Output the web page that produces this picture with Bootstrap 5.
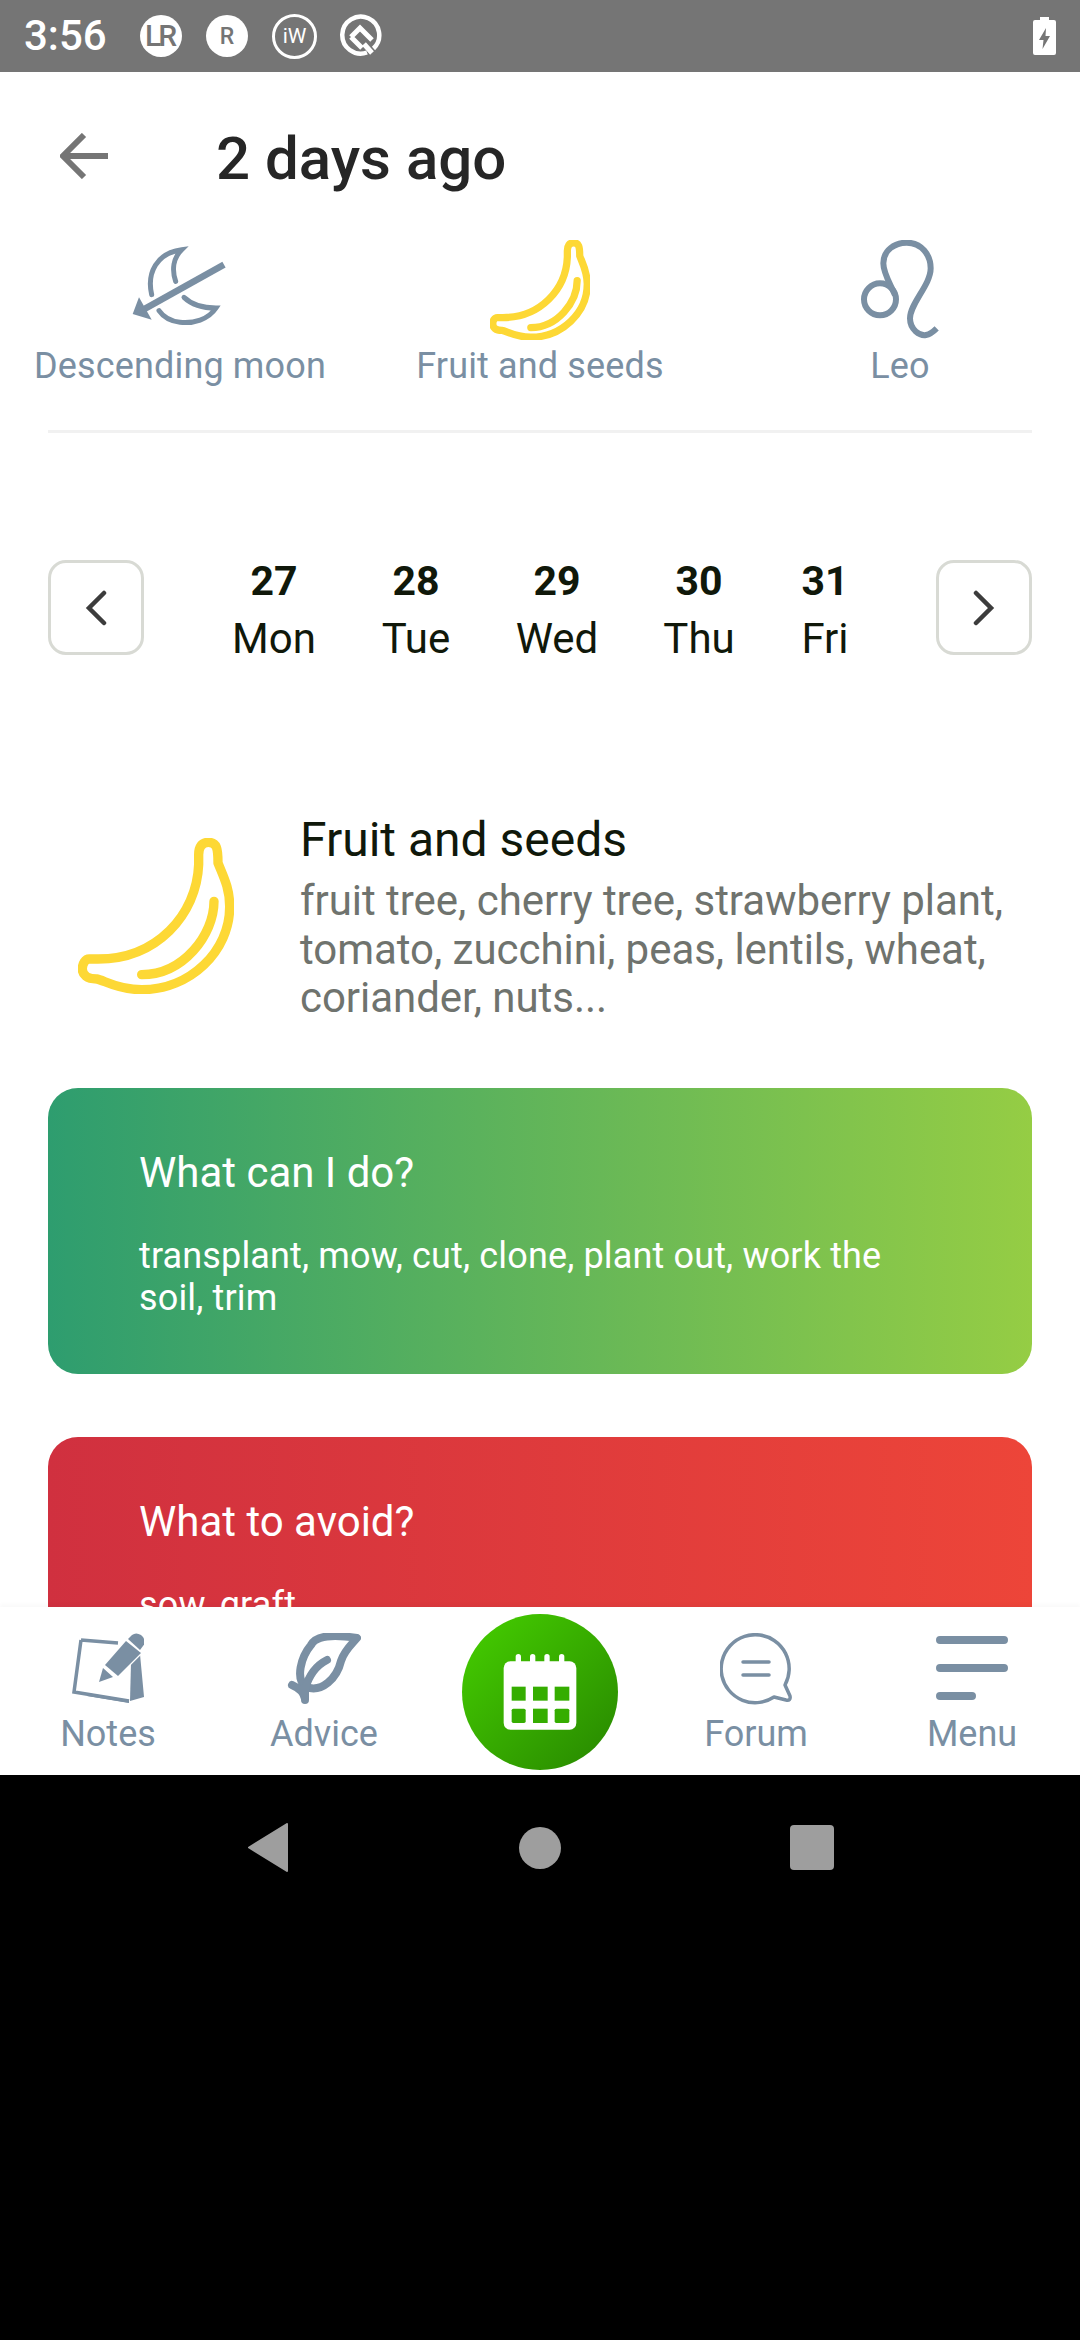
<!DOCTYPE html>
<html lang="en">
<head>
    <meta charset="UTF-8">
    <meta name="viewport" content="width=device-width, initial-scale=1.0">
    <title>2 days ago</title>
    <link href="https://cdn.jsdelivr.net/npm/bootstrap@5.3.0/dist/css/bootstrap.min.css" rel="stylesheet">
    <style>
        html, body { background: #000; overflow: hidden; height: 2340px; }
        body { font-family: Roboto, "Liberation Sans", sans-serif; }
        .phone-shell { width: 1080px; height: 2340px; overflow: hidden; }

        /* status bar */
        .status-strip { height: 72px; background: #757575; color: #fff; padding: 0 24px; }
        .status-time { font-size: 42px; font-weight: 500; line-height: 72px; width: 116px; }
        .status-dot { width: 42px; height: 42px; border-radius: 50%; background: #fff; color: #757575; font-weight: 500; margin-right: 24px; line-height: 1; }
        .dot-lr { font-size: 30px; letter-spacing: -3px; padding-right: 3px; }
        .dot-r { font-size: 23px; }
        .dot-iw { background: transparent; color: #fff; border: 3px solid #fff; font-size: 21px; font-weight: 400; width: 45px; height: 45px; margin-right: 22px; }

        /* scrolling area */
        .screen-body { height: 1535px; background: #fff; overflow: hidden; }
        .page-head { height: 168px; padding-left: 60px; }
        .page-title { font-size: 60px; font-weight: 500; color: #262626; margin: 6px 0 0 108px; line-height: 70px; }
        .moon-col svg { display: block; margin: 0 auto; }
        .moon-label { font-size: 36px; letter-spacing: .15px; line-height: 42px; color: #7a8fa3; margin-top: 5px; }
        .thin-rule { height: 3px; background: #f1f1f1; margin: 43px 48px 0; }

        .date-strip { margin: 127px 48px 0; height: 95px; }
        .arrow-box { width: 96px; height: 95px; border: 3px solid #d8dad4; border-radius: 18px; background: #fff; padding: 0; }
        .date-cell { position: absolute; top: -8px; transform: translateX(-50%); text-align: center; color: #10180a; font-size: 42px; line-height: 58px; white-space: nowrap; }
        .date-cell b { display: block; font-size: 41px; font-weight: 700; }
        .date-list { position: relative; flex: 1 1 auto; height: 95px; }

        .fruit-block { margin: 183px 48px 0 78px; }
        .fruit-pic { width: 156px; height: 156px; margin-right: 66px; flex: none; }
        .fruit-text { margin-top: -26px; }
        .fruit-name { font-size: 48px; line-height: 56px; color: #10180a; font-weight: 400; margin: 0 0 9px; }
        .fruit-desc { font-size: 42px; letter-spacing: -.04px; line-height: 48.5px; color: #6f736e; margin: 0; }

        .tip-panel { margin: 0 48px; border: 0; border-radius: 30px; color: #fff; padding: 60px 91px 55px; }
        .tip-green { margin-top: 65px; background: linear-gradient(90deg, #2e9d6f, #95cd44); }
        .tip-red { margin-top: 63px; background: linear-gradient(90deg, #d0303f, #ed4539); }
        .tip-head { font-size: 42px; line-height: 50px; font-weight: 400; margin: 0 0 37px; }
        .tip-body { font-size: 36px; letter-spacing: .15px; line-height: 42px; margin: 0; }

        /* bottom tabs */
        .tab-strip { height: 168px; background: #fff; position: relative; box-shadow: 0 -3px 4px rgba(0, 0, 0, .025); }
        .tab-slot { width: 216px; color: #7a8fa3; font-size: 36px; line-height: 42px; padding-top: 26px; text-align: center; }
        .tab-slot svg { display: block; margin: 0 auto 8px; }
        .fab-slot { width: 216px; padding-top: 7px; }
        .fab-round { width: 156px; height: 156px; border-radius: 50%; margin: 0 auto; background: linear-gradient(135deg, #46d000, #278600); }

        /* android buttons */
        .sys-strip { height: 565px; background: #000; padding-top: 48px; gap: 229px; }
    </style>
</head>
<body>
    <svg width="0" height="0" class="d-block position-absolute">
        <symbol id="banana" viewBox="234 110 468 468">
            <path fill="none" stroke="#fdd835" stroke-linecap="round" stroke-linejoin="round" d="M654 185C654 140 650 123 625 123C605 123 596 137 596 160V190C590 340 470 475 290 473H268C255 473 247 488 247 503C247 520 260 533 290 533C310 535 350 565 425 565C570 565 690 450 689 315C689 260 670 225 654 185Z"/>
            <path fill="none" stroke="#fdd835" stroke-linecap="round" d="M642 300C642 400 550 520 425 520"/>
        </symbol>
    </svg>

    <div class="phone-shell d-flex flex-column">
        <div class="status-strip d-flex align-items-center flex-none">
            <span class="status-time">3:56</span>
            <span class="status-dot dot-lr d-flex align-items-center justify-content-center">LR</span>
            <span class="status-dot dot-r d-flex align-items-center justify-content-center">R</span>
            <span class="status-dot dot-iw d-flex align-items-center justify-content-center">iW</span>
            <svg width="44" height="44" viewBox="0 0 44 44">
                <path d="M28 38.5A18.5 18.5 0 1 1 34.5 34.5" fill="none" stroke="#fff" stroke-width="4.5"/>
                <path d="M12 23L21 14L33 26M12 23L23 34M25 30L33 39" fill="none" stroke="#fff" stroke-width="5"/>
            </svg>
            <svg class="ms-auto" width="23" height="38" viewBox="0 0 23 38">
                <path d="M7 0H16V3H21Q23 3 23 5V36Q23 38 21 38H2Q0 38 0 36V5Q0 3 2 3H7Z" fill="#fff"/>
                <path d="M13 11L6 23H10.5L9.5 32L17 19H12.5Z" fill="#757575"/>
            </svg>
        </div>

        <div class="screen-body">
            <div class="page-head d-flex align-items-center">
                <svg width="48" height="46" viewBox="0 0 48 46"><path d="M48 23H4M24 2L3 23L24 44" fill="none" stroke="#757575" stroke-width="6"/></svg>
                <h1 class="page-title">2 days ago</h1>
            </div>

            <div class="row g-0 text-center">
                <div class="col-4 moon-col">
                    <svg width="140" height="100" viewBox="0 31 420 300">
                        <g fill="none" stroke="#7a8fa3" stroke-width="15" stroke-linecap="round">
                            <path d="M125 195C110 130 140 70 215 60C190 85 185 120 197 155"/>
                            <path d="M222 203C245 225 275 235 318 235C295 270 250 282 210 278C185 275 160 262 147 243"/>
                        </g>
                        <path d="M342 105L100 240" stroke="#7a8fa3" stroke-width="20" fill="none"/>
                        <path d="M68 253L87 203L125 270Z" fill="#7a8fa3"/>
                    </svg>
                    <div class="moon-label">Descending moon</div>
                </div>
                <div class="col-4 moon-col">
                    <svg width="100" height="100" stroke-width="34"><use href="#banana"/></svg>
                    <div class="moon-label">Fruit and seeds</div>
                </div>
                <div class="col-4 moon-col">
                    <svg width="140" height="100" viewBox="-30 30 420 300">
                        <g fill="none" stroke="#7a8fa3" stroke-width="18">
                            <circle cx="120" cy="208" r="48"/>
                            <path d="M165 195C150 160 130 130 130 100C130 60 165 38 200 38C245 38 272 75 272 115C272 165 210 220 210 265C210 300 240 318 258 315C270 313 280 305 290 295"/>
                        </g>
                    </svg>
                    <div class="moon-label">Leo</div>
                </div>
            </div>
            <div class="thin-rule"></div>

            <div class="date-strip d-flex justify-content-between">
                <button type="button" class="btn arrow-box d-flex align-items-center justify-content-center flex-shrink-0">
                    <svg width="22" height="36" viewBox="0 0 22 36"><path d="M19 3L4 18L19 33" fill="none" stroke="#3c3c3c" stroke-width="4.5" stroke-linecap="round"/></svg>
                </button>
                <div class="date-list" id="dateList"></div>
                <button type="button" class="btn arrow-box d-flex align-items-center justify-content-center flex-shrink-0">
                    <svg width="22" height="36" viewBox="0 0 22 36"><path d="M3 3L18 18L3 33" fill="none" stroke="#3c3c3c" stroke-width="4.5" stroke-linecap="round"/></svg>
                </button>
            </div>

            <div class="fruit-block d-flex">
                <svg class="fruit-pic" stroke-width="28"><use href="#banana"/></svg>
                <div class="fruit-text">
                    <h2 class="fruit-name">Fruit and seeds</h2>
                    <p class="fruit-desc">fruit tree, cherry tree, strawberry plant, tomato, zucchini, peas, lentils, wheat, coriander, nuts...</p>
                </div>
            </div>

            <div class="card tip-panel tip-green">
                <h3 class="tip-head">What can I do?</h3>
                <p class="tip-body">transplant, mow, cut, clone, plant out, work the soil, trim</p>
            </div>
            <div class="card tip-panel tip-red">
                <h3 class="tip-head">What to avoid?</h3>
                <p class="tip-body">sow, graft</p>
            </div>
        </div>

        <nav class="tab-strip d-flex">
            <div class="tab-slot">
                <svg width="72" height="72" viewBox="0 0 72 72">
                    <path d="M9 7L2 59L57 68M9 7L46 10" fill="none" stroke="#7a8fa3" stroke-width="3.5"/>
                    <path d="M58 68L72 64L68 21L59 30Z" fill="#7a8fa3"/>
                    <path d="M15 63L57 70V67L15 60Z" fill="#7a8fa3"/>
                    <g fill="#7a8fa3" stroke="#fff" stroke-width="2.5" paint-order="stroke">
                        <path d="M33 32L54 8L69 20L46 43Z"/>
                        <path d="M56 6L60 2Q64 -1 69 2L71 4Q74 9 71 13L68 17Z"/>
                        <path d="M31 35L41 44L27 49Z"/>
                    </g>
                </svg>
                Notes
            </div>
            <div class="tab-slot">
                <svg width="74" height="72" viewBox="0 0 74 72">
                    <path d="M70 5C50 2 30 1 24 12C14 24 8 46 19 54C35 60 50 45 54 28C57 18 64 12 70 5Z" fill="none" stroke="#7a8fa3" stroke-width="8" stroke-linejoin="round"/>
                    <path d="M40 27C30 32 22 42 18 56V67M5 52C12 55 17 59 18 66" fill="none" stroke="#7a8fa3" stroke-width="8" stroke-linecap="round"/>
                </svg>
                Advice
            </div>
            <div class="fab-slot">
                <div class="fab-round d-flex align-items-center justify-content-center">
                    <svg width="74" height="76" viewBox="160 158 218 228">
                        <rect x="160" y="180" width="218" height="205" rx="20" fill="#fff"/>
                        <g fill="#fff">
                            <rect x="196" y="158" width="16" height="32" rx="8"/>
                            <rect x="239" y="158" width="16" height="32" rx="8"/>
                            <rect x="282" y="158" width="16" height="32" rx="8"/>
                            <rect x="326" y="158" width="16" height="32" rx="8"/>
                        </g>
                        <g fill="#35ad00">
                            <rect x="184" y="256" width="42" height="42"/>
                            <rect x="248" y="256" width="44" height="42"/>
                            <rect x="313" y="256" width="44" height="42"/>
                            <rect x="184" y="322" width="42" height="43" rx="5"/>
                            <rect x="248" y="322" width="44" height="43"/>
                            <rect x="313" y="322" width="44" height="43" rx="5"/>
                        </g>
                    </svg>
                </div>
            </div>
            <div class="tab-slot">
                <svg width="72" height="72" viewBox="0 0 72 72">
                    <path d="M54 64A34 34 0 1 1 65 52L70 63Q71 68 66 67Z" fill="none" stroke="#7a8fa3" stroke-width="3.5" stroke-linejoin="round"/>
                    <path d="M23 29H49M23 42H49" fill="none" stroke="#7a8fa3" stroke-width="3.5" stroke-linecap="round"/>
                </svg>
                Forum
            </div>
            <div class="tab-slot">
                <svg width="72" height="72" viewBox="0 0 72 72">
                    <path d="M4 7H68M4 35H68M4 63H36" fill="none" stroke="#7a8fa3" stroke-width="8" stroke-linecap="round"/>
                </svg>
                Menu
            </div>
        </nav>

        <div class="sys-strip d-flex justify-content-center align-items-start">
            <svg width="43" height="49" viewBox="0 0 43 49"><path d="M2 24.5L40 1V48Z" fill="#9e9e9e" stroke="#9e9e9e" stroke-width="2" stroke-linejoin="round"/></svg>
            <svg class="mt-1" width="42" height="42"><circle cx="21" cy="21" r="21" fill="#9e9e9e"/></svg>
            <svg width="44" height="47"><rect y="2" width="44" height="45" rx="4" fill="#9e9e9e"/></svg>
        </div>
    </div>

    <script src="https://cdn.jsdelivr.net/npm/bootstrap@5.3.0/dist/js/bootstrap.bundle.min.js"></script>
    <script>
        // day cells, centres measured from the left of the strip between the arrows
        const days = [
            { num: 27, name: 'Mon', x: 274 },
            { num: 28, name: 'Tue', x: 416 },
            { num: 29, name: 'Wed', x: 557 },
            { num: 30, name: 'Thu', x: 699 },
            { num: 31, name: 'Fri', x: 825 }
        ];
        const list = document.getElementById('dateList');
        days.forEach(d => {
            const cell = document.createElement('div');
            cell.className = 'date-cell';
            cell.style.left = (d.x - 144) + 'px';
            cell.innerHTML = `<b>${d.num}</b>${d.name}`;
            list.appendChild(cell);
        });
    </script>
</body>
</html>
